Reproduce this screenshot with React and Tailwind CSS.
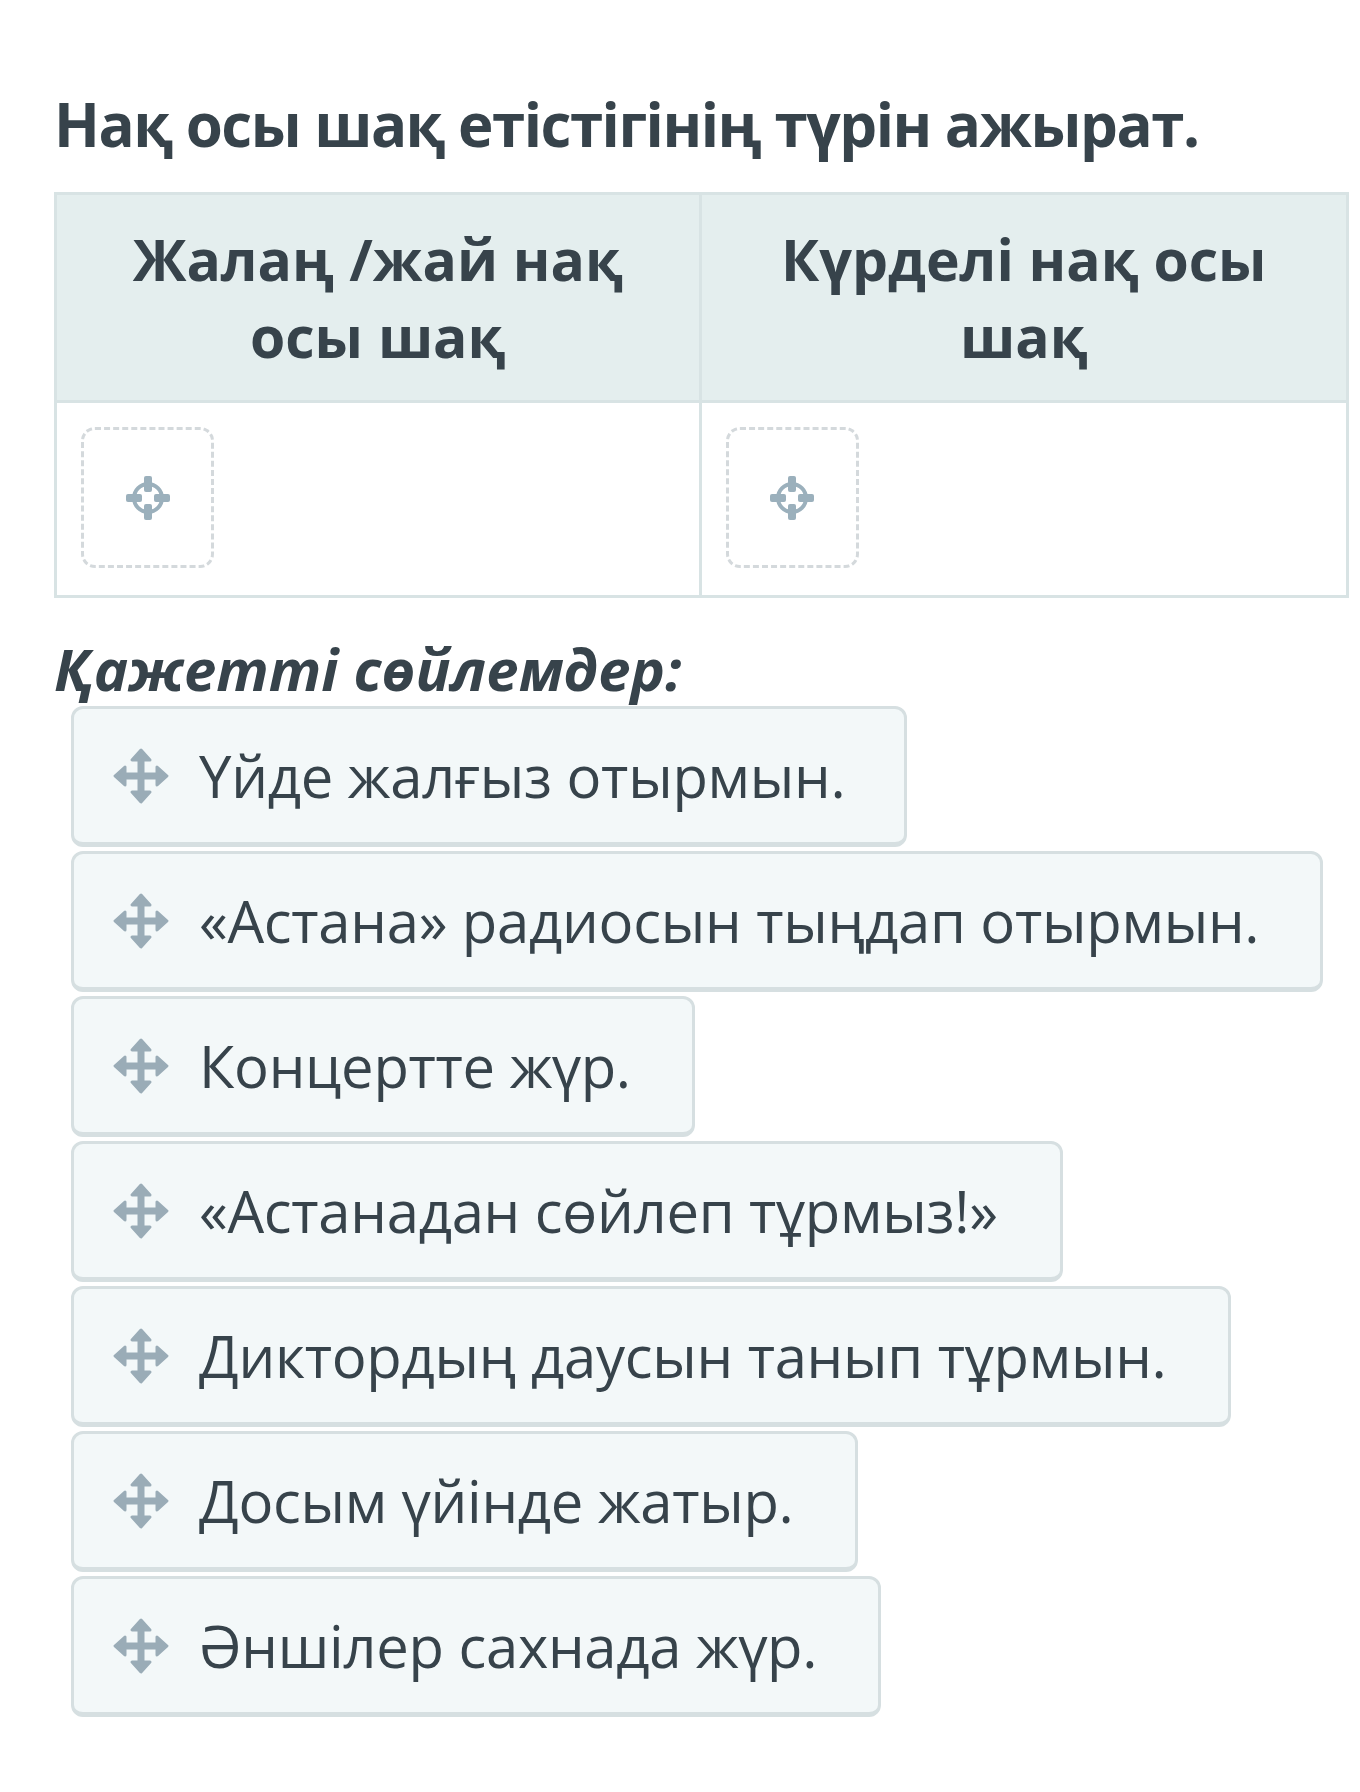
import React from 'react';

const sentences = [
  { text: 'Үйде жалғыз отырмын.', w: 'w-[836px]' },
  { text: '«Астана» радиосын тыңдап отырмын.', w: 'w-[1252px]' },
  { text: 'Концертте жүр.', w: 'w-[624px]' },
  { text: '«Астанадан сөйлеп тұрмыз!»', w: 'w-[992px]' },
  { text: 'Диктордың даусын танып тұрмын.', w: 'w-[1160px]' },
  { text: 'Досым үйінде жатыр.', w: 'w-[787px]' },
  { text: 'Әншілер сахнада жүр.', w: 'w-[810px]' },
];

const MoveIcon = () => (
  <svg className="w-[60px] h-[60px] shrink-0" viewBox="0 0 60 60" fill="#9aacb7" stroke="#9aacb7" strokeLinejoin="round">
    {/* four-way drag handle */}
    <rect x="26.5" y="10" width="7" height="40" strokeWidth="0" />
    <rect x="10" y="26.5" width="40" height="7" strokeWidth="0" />
    <polygon points="30,4 21,14 39,14" strokeWidth="3" />
    <polygon points="30,56 21,46 39,46" strokeWidth="3" />
    <polygon points="4,30 14,21 14,39" strokeWidth="3" />
    <polygon points="56,30 46,21 46,39" strokeWidth="3" />
  </svg>
);

const TargetIcon = () => (
  <svg className="w-[52px] h-[52px]" viewBox="0 0 52 52" fill="#9bb0bc">
    <circle cx="26" cy="26" r="14" fill="none" stroke="#9bb0bc" strokeWidth="4" />
    <rect x="22" y="4" width="8" height="16" rx="2" />
    <rect x="22" y="32" width="8" height="16" rx="2" />
    <rect x="4" y="22" width="16" height="8" rx="2" />
    <rect x="32" y="22" width="16" height="8" rx="2" />
  </svg>
);

const DropZone = () => (
  <div className="w-[133px] h-[141px] rounded-[14px] border-[3px] border-dashed border-[#d4d9dc] flex items-center justify-center">
    <TargetIcon />
  </div>
);

export default function App() {
  return (
    <div className="min-h-[1792px] bg-white text-[#37434b] font-['Open_Sans',sans-serif] pl-[54px] pr-[11px] pt-[84px]">
      <h1 className="text-[60px] font-bold leading-[80px] tracking-[-0.025em]">
        Нақ осы шақ етістігінің түрін ажырат.
      </h1>

      <div className="mt-[28px] grid grid-cols-2 border-[3px] border-[#d8e3e4]">
        <div className="h-[208px] bg-[#e4eeee] border-r-[3px] border-b-[3px] border-[#d8e3e4] flex items-center justify-center text-center px-6">
          <span className="text-[57px] font-bold leading-[77px]">Жалаң /жай нақ<br />осы шақ</span>
        </div>
        <div className="h-[208px] bg-[#e4eeee] border-b-[3px] border-[#d8e3e4] flex items-center justify-center text-center px-6">
          <span className="text-[57px] font-bold leading-[77px]">Күрделі нақ осы<br />шақ</span>
        </div>
        <div className="h-[192px] border-r-[3px] border-[#d8e3e4] pl-[24px] pt-[24px]">
          <DropZone />
        </div>
        <div className="h-[192px] pl-[24px] pt-[24px]">
          <DropZone />
        </div>
      </div>

      <h2 className="mt-[38px] text-[58px] font-bold italic leading-[66px]">Қажетті сөйлемдер:</h2>

      <div className="mt-[4px] pl-[17px] flex flex-col gap-[4px]">
        {sentences.map((s) => (
          <div
            key={s.text}
            className={`${s.w} h-[141px] rounded-[12px] bg-[#f3f8f9] border-[3px] border-b-[5px] border-[#d6dfe1] flex items-center gap-[28px] pl-[37px]`}
          >
            <MoveIcon />
            <span className="text-[58px] leading-none tracking-[-0.005em] whitespace-nowrap">{s.text}</span>
          </div>
        ))}
      </div>
    </div>
  );
}
